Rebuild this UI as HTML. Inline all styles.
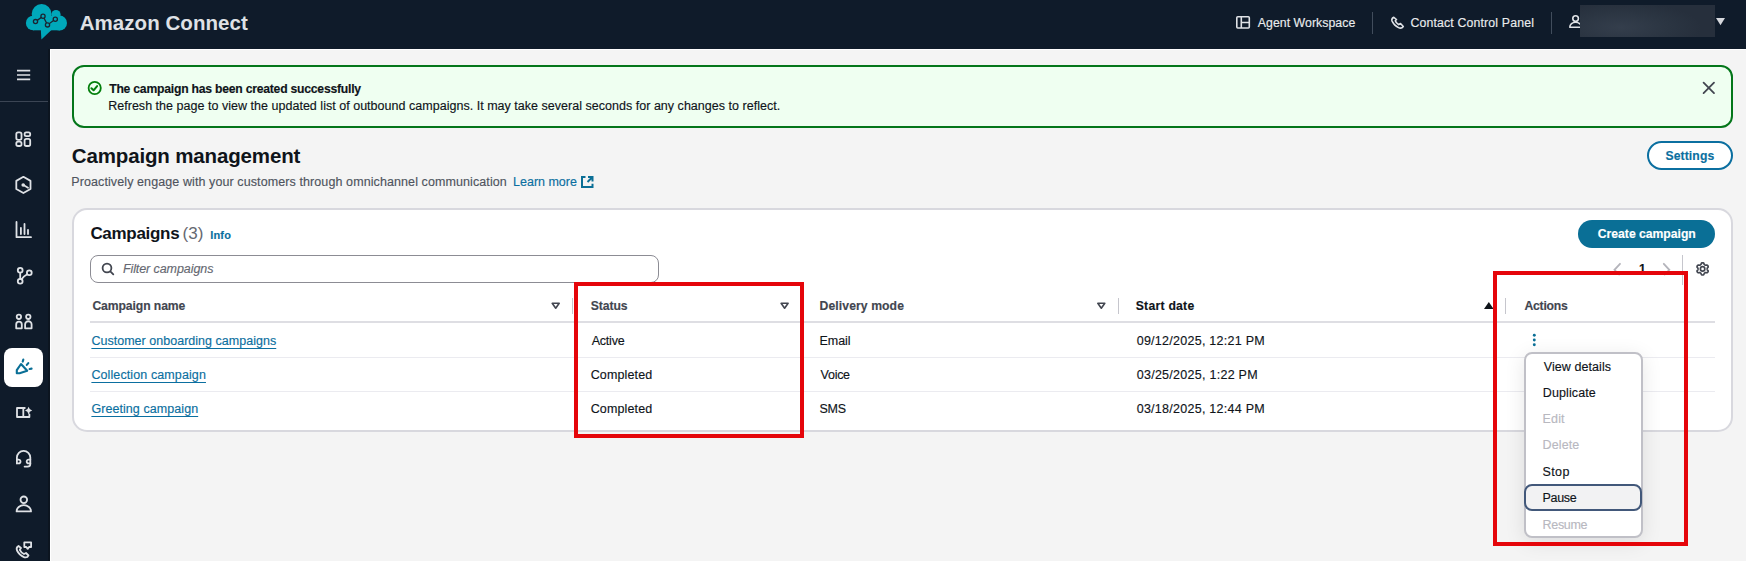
<!DOCTYPE html><html><head><meta charset="utf-8"><style>
html,body{margin:0;padding:0;}
body{width:1746px;height:561px;overflow:hidden;position:relative;background:#f4f4f4;font-family:"Liberation Sans",sans-serif;}
.t{position:absolute;white-space:nowrap;-webkit-text-stroke:0.15px currentColor;}
.abs{position:absolute;}
svg{position:absolute;overflow:visible;}
</style></head><body>

<div class="abs" style="left:0;top:0;width:1746px;height:49px;background:#0f1b2a"></div>
<div class="abs" style="left:0;top:49px;width:50px;height:512px;background:#0f1b2a"></div>
<div class="t " style="left:79.7px;top:9.79px;font-size:20.5px;line-height:25.62px;color:#dfe1e5;font-weight:bold;font-style:normal;letter-spacing:0.054px;-webkit-text-stroke:0;">Amazon Connect</div>
<div class="t " style="left:1257.8px;top:15.85px;font-size:12.3px;line-height:15.38px;color:#e9ebed;font-weight:normal;font-style:normal;letter-spacing:0.043px;">Agent Workspace</div>
<div class="t " style="left:1410.4px;top:15.85px;font-size:12.3px;line-height:15.38px;color:#e9ebed;font-weight:normal;font-style:normal;letter-spacing:0.16px;">Contact Control Panel</div>
<div class="abs" style="left:1372px;top:12px;width:1px;height:22px;background:#414d5c"></div>
<div class="abs" style="left:1551px;top:12px;width:1px;height:22px;background:#414d5c"></div>
<div class="abs" style="left:0;top:101px;width:50px;height:1px;background:#3b4554"></div>
<div class="abs" style="left:50px;top:49px;width:1696px;height:1px;background:#ffffff"></div>
<div class="abs" style="left:50px;top:49px;width:1px;height:512px;background:#ffffff"></div>
<div class="abs" style="left:48px;top:49px;width:2px;height:512px;background:#0c1520"></div>
<div class="abs" style="left:4px;top:348px;width:39px;height:39px;border-radius:8px;background:#ffffff"></div>
<div class="abs" style="left:72px;top:65px;width:1661px;height:63px;box-sizing:border-box;border:2px solid #04761a;border-radius:12px;background:#effff1"></div>
<div class="t " style="left:109.2px;top:81.55px;font-size:12.2px;line-height:15.25px;color:#0f141a;font-weight:bold;font-style:normal;letter-spacing:-0.232px;">The campaign has been created successfully</div>
<div class="t " style="left:108.2px;top:98.76px;font-size:12.5px;line-height:15.62px;color:#0f141a;font-weight:normal;font-style:normal;letter-spacing:0.024px;">Refresh the page to view the updated list of outbound campaigns. It may take several seconds for any changes to reflect.</div>
<div class="t " style="left:71.8px;top:143.29px;font-size:20.5px;line-height:25.62px;color:#0f141a;font-weight:bold;font-style:normal;letter-spacing:-0.15px;-webkit-text-stroke:0;">Campaign management</div>
<div class="t " style="left:71.3px;top:175.46px;font-size:12.5px;line-height:15.62px;color:#4f545e;font-weight:normal;font-style:normal;letter-spacing:0.096px;">Proactively engage with your customers through omnichannel communication</div>
<div class="t " style="left:513.1px;top:175.46px;font-size:12.5px;line-height:15.62px;color:#0b6fa0;font-weight:normal;font-style:normal;letter-spacing:-0.011px;">Learn more</div>
<div class="abs" style="left:1647px;top:141px;width:86px;height:29px;box-sizing:border-box;border:2px solid #0b6fa0;border-radius:15px;background:#fff"></div>
<div class="t " style="left:1665.4px;top:149.15px;font-size:12.2px;line-height:15.25px;color:#0b6fa0;font-weight:bold;font-style:normal;letter-spacing:0.114px;">Settings</div>
<div class="abs" style="left:72px;top:208px;width:1661px;height:224px;box-sizing:border-box;border:2px solid #d8d8de;border-radius:15px;background:#fff"></div>
<div class="t " style="left:90.4px;top:223.28px;font-size:17px;line-height:21.25px;color:#0f141a;font-weight:bold;font-style:normal;letter-spacing:-0.3px;-webkit-text-stroke:0;">Campaigns</div>
<div class="t " style="left:182.5px;top:223.28px;font-size:17px;line-height:21.25px;color:#656871;font-weight:normal;font-style:normal;letter-spacing:0.05px;-webkit-text-stroke:0;">(3)</div>
<div class="t " style="left:210.2px;top:229.21px;font-size:11px;line-height:13.75px;color:#0b6fa0;font-weight:bold;font-style:normal;letter-spacing:0.2px;">Info</div>
<div class="abs" style="left:1578px;top:220px;width:137px;height:28px;border-radius:14px;background:#0a6f96"></div>
<div class="t " style="left:1597.8px;top:226.85px;font-size:12.2px;line-height:15.25px;color:#ffffff;font-weight:bold;font-style:normal;letter-spacing:-0.014px;">Create campaign</div>
<div class="abs" style="left:90px;top:255px;width:569px;height:28px;box-sizing:border-box;border:1px solid #8c8c94;border-radius:8px;background:#fff"></div>
<div class="t " style="left:122.9px;top:262.16px;font-size:12.5px;line-height:15.62px;color:#656871;font-weight:normal;font-style:italic;letter-spacing:-0.08px;">Filter campaigns</div>
<div class="t " style="left:1639.0px;top:262.25px;font-size:12.2px;line-height:15.25px;color:#0f141a;font-weight:bold;font-style:normal;letter-spacing:0px;">1</div>
<div class="abs" style="left:1682px;top:255px;width:1px;height:30px;background:#c6c6cd"></div>
<div class="t " style="left:92.4px;top:299.15px;font-size:12.2px;line-height:15.25px;color:#424650;font-weight:bold;font-style:normal;letter-spacing:-0.1px;">Campaign name</div>
<div class="t " style="left:590.7px;top:299.15px;font-size:12.2px;line-height:15.25px;color:#424650;font-weight:bold;font-style:normal;letter-spacing:-0.08px;">Status</div>
<div class="t " style="left:819.6px;top:299.15px;font-size:12.2px;line-height:15.25px;color:#424650;font-weight:bold;font-style:normal;letter-spacing:0.083px;">Delivery mode</div>
<div class="t " style="left:1135.7px;top:299.15px;font-size:12.2px;line-height:15.25px;color:#0f141a;font-weight:bold;font-style:normal;letter-spacing:0.256px;">Start date</div>
<div class="t " style="left:1524.4px;top:299.15px;font-size:12.2px;line-height:15.25px;color:#424650;font-weight:bold;font-style:normal;letter-spacing:-0.217px;">Actions</div>
<div class="abs" style="left:90px;top:321px;width:1625px;height:2px;background:#dedee3"></div>
<div class="abs" style="left:90px;top:357px;width:1625px;height:1px;background:#ebebf0"></div>
<div class="abs" style="left:90px;top:391px;width:1625px;height:1px;background:#ebebf0"></div>
<div class="abs" style="left:572px;top:298px;width:1px;height:16px;background:#c6c6cd"></div>
<div class="abs" style="left:1118px;top:298px;width:1px;height:16px;background:#c6c6cd"></div>
<div class="abs" style="left:1505px;top:298px;width:1px;height:16px;background:#c6c6cd"></div>
<div class="t " style="left:91.4px;top:334.26px;font-size:12.5px;line-height:15.62px;color:#0b6fa0;font-weight:normal;font-style:normal;letter-spacing:0.025px;text-decoration:underline;text-underline-offset:2.5px;text-decoration-thickness:1px;">Customer onboarding campaigns</div>
<div class="t " style="left:591.7px;top:334.26px;font-size:12.5px;line-height:15.62px;color:#0f141a;font-weight:normal;font-style:normal;letter-spacing:-0.22px;">Active</div>
<div class="t " style="left:819.6px;top:334.26px;font-size:12.5px;line-height:15.62px;color:#0f141a;font-weight:normal;font-style:normal;letter-spacing:-0.1px;">Email</div>
<div class="t " style="left:1136.7px;top:334.26px;font-size:12.5px;line-height:15.62px;color:#0f141a;font-weight:normal;font-style:normal;letter-spacing:0.263px;">09/12/2025, 12:21 PM</div>
<div class="t " style="left:91.4px;top:368.36px;font-size:12.5px;line-height:15.62px;color:#0b6fa0;font-weight:normal;font-style:normal;letter-spacing:0.106px;text-decoration:underline;text-underline-offset:2.5px;text-decoration-thickness:1px;">Collection campaign</div>
<div class="t " style="left:590.7px;top:368.36px;font-size:12.5px;line-height:15.62px;color:#0f141a;font-weight:normal;font-style:normal;letter-spacing:0.137px;">Completed</div>
<div class="t " style="left:820.6px;top:368.36px;font-size:12.5px;line-height:15.62px;color:#0f141a;font-weight:normal;font-style:normal;letter-spacing:-0.275px;">Voice</div>
<div class="t " style="left:1136.7px;top:368.36px;font-size:12.5px;line-height:15.62px;color:#0f141a;font-weight:normal;font-style:normal;letter-spacing:0.272px;">03/25/2025, 1:22 PM</div>
<div class="t " style="left:91.4px;top:402.46px;font-size:12.5px;line-height:15.62px;color:#0b6fa0;font-weight:normal;font-style:normal;letter-spacing:0.069px;text-decoration:underline;text-underline-offset:2.5px;text-decoration-thickness:1px;">Greeting campaign</div>
<div class="t " style="left:590.7px;top:402.46px;font-size:12.5px;line-height:15.62px;color:#0f141a;font-weight:normal;font-style:normal;letter-spacing:0.137px;">Completed</div>
<div class="t " style="left:819.6px;top:402.46px;font-size:12.5px;line-height:15.62px;color:#0f141a;font-weight:normal;font-style:normal;letter-spacing:-0.35px;">SMS</div>
<div class="t " style="left:1136.7px;top:402.46px;font-size:12.5px;line-height:15.62px;color:#0f141a;font-weight:normal;font-style:normal;letter-spacing:0.263px;">03/18/2025, 12:44 PM</div>
<div class="abs" style="left:1524px;top:352px;width:119px;height:186px;box-sizing:border-box;border:2px solid #c0c0c7;border-radius:8px;background:#fff;box-shadow:0 4px 20px rgba(0,7,22,0.10)"></div>
<div class="abs" style="left:1524px;top:484px;width:118px;height:27px;box-sizing:border-box;border:2px solid #42587a;border-radius:8px;background:#f2f2f3"></div>
<div class="t " style="left:1543.8px;top:359.56px;font-size:12.5px;line-height:15.62px;color:#0f141a;font-weight:normal;font-style:normal;letter-spacing:0.064px;">View details</div>
<div class="t " style="left:1542.8px;top:385.56px;font-size:12.5px;line-height:15.62px;color:#0f141a;font-weight:normal;font-style:normal;letter-spacing:0.1px;">Duplicate</div>
<div class="t " style="left:1542.6px;top:412.06px;font-size:12.5px;line-height:15.62px;color:#b8b8bf;font-weight:normal;font-style:normal;letter-spacing:0.133px;">Edit</div>
<div class="t " style="left:1542.6px;top:438.26px;font-size:12.5px;line-height:15.62px;color:#b8b8bf;font-weight:normal;font-style:normal;letter-spacing:0.12px;">Delete</div>
<div class="t " style="left:1542.6px;top:464.56px;font-size:12.5px;line-height:15.62px;color:#0f141a;font-weight:normal;font-style:normal;letter-spacing:0.35px;">Stop</div>
<div class="t " style="left:1542.6px;top:491.36px;font-size:12.5px;line-height:15.62px;color:#0f141a;font-weight:normal;font-style:normal;letter-spacing:-0.35px;">Pause</div>
<div class="t " style="left:1542.6px;top:517.96px;font-size:12.5px;line-height:15.62px;color:#b8b8bf;font-weight:normal;font-style:normal;letter-spacing:-0.32px;">Resume</div>
<svg width="1746" height="561" viewBox="0 0 1746 561" style="left:0;top:0">
<g fill="#00a8ba"><circle cx="41.6" cy="13.9" r="9.9"/><circle cx="56" cy="14.6" r="4.6"/><circle cx="33.2" cy="23" r="7.3"/><circle cx="59.6" cy="23" r="7.4"/><rect x="33" y="15.7" width="27" height="14.6"/><path d="M40.8 29 L52.5 29 L41.4 39.6 Z"/></g>
<g fill="none" stroke="#1b2431" stroke-width="1.3"><path d="M35.5 21.6 L43 16.3 L47.5 24.9 L55.3 19.2"/></g><g fill="#00a8ba" stroke="#1b2431" stroke-width="1.3"><circle cx="35.5" cy="21.6" r="2.1"/><circle cx="43" cy="16.3" r="2.1"/><circle cx="47.5" cy="24.9" r="2.1"/><circle cx="55.3" cy="19.2" r="2.1"/></g>
<g stroke="#dfe2e6" stroke-width="1.6"><path d="M17 70.6 H30.2 M17 75 H30.2 M17 79.4 H30.2"/></g>
<g fill="none" stroke="#dfe2e6" stroke-width="1.8" stroke-linejoin="round" stroke-linecap="round"><rect x="16.3" y="132.3" width="5.2" height="7.6" rx="1.8"/><rect x="24.6" y="132.3" width="5.6" height="3.8" rx="1.6"/><rect x="16.3" y="141.6" width="5.2" height="4.4" rx="1.8"/><rect x="24.6" y="138.8" width="5.6" height="7.2" rx="1.8"/><path d="M23.4 176.8 L30.5 180.9 L30.5 189 L23.4 193 L16.3 189 L16.3 180.9 Z"/><path d="M23.4 185 L28 187.7"/><circle cx="23.2" cy="185" r="0.9"/><path d="M16.5 222 V237.2 H31"/><path d="M20.9 227.8 V234 M24.5 224 V234 M28 229.8 V234"/><circle cx="20.2" cy="270.2" r="2.4"/><circle cx="20.2" cy="281.3" r="2.4"/><circle cx="29.3" cy="272.8" r="2.4"/><path d="M20.2 272.6 V278.9"/><path d="M21.5 279.3 Q 23 276.5 27.2 274.2"/><circle cx="18.9" cy="316.8" r="2.2"/><circle cx="28.3" cy="316.8" r="2.2"/><path d="M16.2 328.3 V324.5 A2.8 2.8 0 0 1 21.8 324.5 V328.3 Z"/><path d="M25.1 328.3 V324.5 A3 3 0 0 1 31.6 324.5 V328.3 Z"/><path d="M23.3 417 H17 V408 H23.3 V417 H29.4 V414.5"/><path d="M23.3 408 H24.8"/><path d="M16.9 463.3 V457.6 A6.7 6.7 0 0 1 30.3 457.6 V464 Q30.3 466.6 27.5 466.6 H24.6"/><path d="M16.9 459.6 H18.6 A1.9 1.9 0 0 1 18.6 463.4 H16.9"/><path d="M30.3 459.6 H28.6 A1.9 1.9 0 0 0 28.6 463.4 H30.3"/><circle cx="23.8" cy="499.8" r="3.3"/><path d="M16.6 511.4 A7.2 6.2 0 0 1 31 511.4 Z"/><path d="M18.5 546 Q15.8 547.5 17 550.5 Q19.5 555.5 24.5 557.3 Q27.5 558 28.5 555.5 L26 553 L24 554 Q21 552.5 19.8 549.8 L21 548 Z"/><path d="M24.3 542.3 H31.1 V547 H29.1 L27.7 548.9 L26.3 547 H24.3 Z"/></g>
<path fill="#dfe2e6" d="M28.6 406.8 Q29.2 409.9 32.2 410.6 Q29.2 411.3 28.6 414.4 Q28 411.3 25 410.6 Q28 409.9 28.6 406.8 Z"/>
<g fill="none" stroke="#0a6f96" stroke-width="2.1" stroke-linejoin="round" stroke-linecap="round"><path d="M21 364 L27.2 370.8 L19.6 373.2 L16.8 373.2 L16.8 370.2 Z"/><path d="M23.3 359.6 L22.7 361.6 M28.3 363.1 L26.8 364.9 M29.6 369 L31.6 368.6"/></g>
<g fill="none" stroke="#dfe2e6" stroke-width="1.6" stroke-linejoin="round"><rect x="1236.8" y="16.8" width="12.5" height="11.2" rx="1"/><path d="M1241.3 16.8 V28 M1241.3 22.5 H1249.3"/><path d="M1393.8 17.3 Q1391.2 18.5 1392 21 Q1394 25.5 1398.5 27.6 Q1401.5 29 1403.3 26.5 L1400.5 23.5 L1398.6 24.6 Q1396 23 1395.3 20.7 L1396.5 19.5 Z"/><circle cx="1575.6" cy="18.6" r="2.8"/><path d="M1569.8 27.2 A5.8 5 0 0 1 1581.4 27.2 Z"/></g>
<path d="M1716 18 L1725 18 L1720.5 25.3 Z" fill="#d5d8dd"/>
<circle cx="94.7" cy="88" r="6.1" fill="none" stroke="#037f0c" stroke-width="1.8"/><path d="M91.4 88.2 L93.6 90.3 L97.1 86.1" fill="none" stroke="#037f0c" stroke-width="2" stroke-linecap="round" stroke-linejoin="round"/>
<path d="M1703.6 82.7 L1714 93.1 M1714 82.7 L1703.6 93.1" stroke="#424650" stroke-width="1.8" stroke-linecap="round"/>
<g fill="none" stroke="#0a6f96" stroke-width="2"><path d="M585.5 177 H582 V187 H592.5 V183.8"/><path d="M588 177 H592.5 V181.5 M592.5 177 L587.5 182"/></g>
<g fill="none" stroke="#424650" stroke-width="1.8" stroke-linecap="round"><circle cx="107" cy="268" r="4.4"/><path d="M110.3 271.3 L113.3 274.3"/></g>
<path d="M552.1999999999999 303.3 H559.1999999999999 L555.6999999999999 308.2 Z" fill="none" stroke="#424650" stroke-width="1.6" stroke-linejoin="round"/>
<path d="M781.0999999999999 303.3 H788.0999999999999 L784.5999999999999 308.2 Z" fill="none" stroke="#424650" stroke-width="1.6" stroke-linejoin="round"/>
<path d="M1097.8 303.3 H1104.8 L1101.3 308.2 Z" fill="none" stroke="#424650" stroke-width="1.6" stroke-linejoin="round"/>
<path d="M1484 309 L1488.8 302 L1493.6 309 Z" fill="#0f141a"/>
<g fill="none" stroke="#b4b4bb" stroke-width="1.8" stroke-linecap="round"><path d="M1620 263.8 L1614.5 269.8 L1619 274.5"/><path d="M1663.8 263.8 L1669.3 269.8 L1664.8 274.5"/></g>
<path d="M1707.20 268.90 L1707.21 269.14 L1707.24 269.39 L1707.29 269.64 L1707.37 269.91 L1707.77 270.28 L1708.13 270.70 L1708.16 271.03 L1708.12 271.36 L1708.02 271.66 L1707.88 271.95 L1707.70 272.21 L1707.49 272.45 L1707.23 272.65 L1706.92 272.79 L1706.38 272.68 L1705.87 272.53 L1705.59 272.59 L1705.34 272.67 L1705.11 272.77 L1704.90 272.88 L1704.70 273.01 L1704.50 273.16 L1704.30 273.33 L1704.11 273.54 L1703.98 274.07 L1703.81 274.59 L1703.53 274.78 L1703.23 274.91 L1702.92 274.98 L1702.60 275.00 L1702.28 274.98 L1701.97 274.91 L1701.67 274.78 L1701.39 274.59 L1701.22 274.07 L1701.09 273.54 L1700.90 273.33 L1700.70 273.16 L1700.50 273.01 L1700.30 272.88 L1700.09 272.77 L1699.86 272.67 L1699.61 272.59 L1699.33 272.53 L1698.82 272.68 L1698.28 272.79 L1697.97 272.65 L1697.71 272.45 L1697.50 272.21 L1697.32 271.95 L1697.18 271.66 L1697.08 271.36 L1697.04 271.03 L1697.07 270.70 L1697.43 270.28 L1697.83 269.91 L1697.91 269.64 L1697.96 269.39 L1697.99 269.14 L1698.00 268.90 L1697.99 268.66 L1697.96 268.41 L1697.91 268.16 L1697.83 267.89 L1697.43 267.52 L1697.07 267.10 L1697.04 266.77 L1697.08 266.44 L1697.18 266.14 L1697.32 265.85 L1697.50 265.59 L1697.71 265.35 L1697.97 265.15 L1698.28 265.01 L1698.82 265.12 L1699.33 265.27 L1699.61 265.21 L1699.86 265.13 L1700.09 265.03 L1700.30 264.92 L1700.50 264.79 L1700.70 264.64 L1700.90 264.47 L1701.09 264.26 L1701.22 263.73 L1701.39 263.21 L1701.67 263.02 L1701.97 262.89 L1702.28 262.82 L1702.60 262.80 L1702.92 262.82 L1703.23 262.89 L1703.53 263.02 L1703.81 263.21 L1703.98 263.73 L1704.11 264.26 L1704.30 264.47 L1704.50 264.64 L1704.70 264.79 L1704.90 264.92 L1705.11 265.03 L1705.34 265.13 L1705.59 265.21 L1705.87 265.27 L1706.38 265.12 L1706.92 265.01 L1707.23 265.15 L1707.49 265.35 L1707.70 265.59 L1707.88 265.85 L1708.02 266.14 L1708.12 266.44 L1708.16 266.77 L1708.13 267.10 L1707.77 267.52 L1707.37 267.89 L1707.29 268.16 L1707.24 268.41 L1707.21 268.66 L1707.20 268.90 Z" fill="none" stroke="#424650" stroke-width="1.7" stroke-linejoin="round"/>
<circle cx="1702.6" cy="268.9" r="2.2" fill="none" stroke="#424650" stroke-width="1.7"/>
<g fill="#0a6f96"><circle cx="1534.3" cy="335.2" r="1.45"/><circle cx="1534.3" cy="340" r="1.45"/><circle cx="1534.3" cy="344.8" r="1.45"/></g>
</svg>
<div class="abs" style="left:1580px;top:5px;width:135px;height:32px;background:radial-gradient(ellipse 60% 80% at 30% 70%,#343e4c,#2b3542 60%,#262f3c)"></div>
<div class="abs" style="left:574px;top:282px;width:230px;height:156px;box-sizing:border-box;border:4px solid #e5050a"></div>
<div class="abs" style="left:1493px;top:271px;width:195px;height:275px;box-sizing:border-box;border:4px solid #e5050a"></div>
</body></html>
